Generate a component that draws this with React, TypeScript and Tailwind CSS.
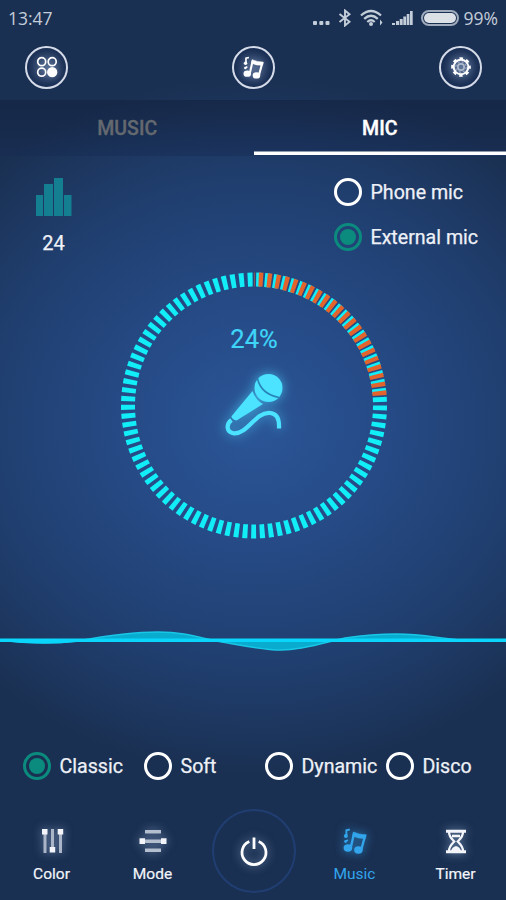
import React from 'react';

const glow = 'drop-shadow-[0_0_5px_rgba(190,215,255,0.55)]';

const MusicNotes: React.FC<{ className?: string }> = ({ className }) => (
  <svg viewBox="0 0 24 26" className={className} fill="none" stroke="currentColor">
    <path d="M7.800 19.500 10.900 6M18.300 21.500 22 8" strokeWidth="2.400" strokeLinecap="round" />
    <path d="M10.300 4Q17 7 23.200 6.800L22.400 10.500Q15.500 10.800 9.700 8Z" fill="currentColor" strokeWidth="0.6" />
    <ellipse cx="4.900" cy="20" rx="4.300" ry="3.700" fill="currentColor" stroke="none" />
    <ellipse cx="15.400" cy="22" rx="4.300" ry="3.700" fill="currentColor" stroke="none" />
    <path d="M3.400 7.500V2.300L6.800 1.500M2.500 13.500L5 12" strokeWidth="1.900" />
    <circle cx="2.900" cy="8" r="2" fill="currentColor" stroke="none" />
    <circle cx="2.600" cy="13.500" r="1.400" fill="currentColor" stroke="none" />
  </svg>
);

const RoundButton: React.FC<{ children: React.ReactNode }> = ({ children }) => (
  <button className="flex h-[43px] w-[43px] items-center justify-center rounded-full border-2 border-[#d5dbe8] bg-[radial-gradient(circle,#34496c_0%,#1a2f54_65%)] text-white">
    {children}
  </button>
);

const Radio: React.FC<{ label: string; checked?: boolean; className?: string }> = ({ label, checked, className = '' }) => (
  <label className={`flex items-center gap-[8.5px] whitespace-nowrap text-[19.6px] leading-7 text-[#eef1f7] [-webkit-text-stroke:0.25px_#eef1f7] ${className}`}>
    <span
      className={`flex h-7 w-7 shrink-0 items-center justify-center rounded-full border-[3px] ${
        checked ? 'border-[#0b8b7e]' : 'border-white'
      }`}
    >
      {checked && <span className="h-4 w-4 rounded-full bg-[#0b8b7e]" />}
    </span>
    <span className="pt-[2px]">{label}</span>
  </label>
);

const StatusBar: React.FC = () => (
  <div className="flex h-9 items-center justify-between pl-2 pr-[8px] font-['Open_Sans','Noto_Sans',sans-serif] text-[17.5px] text-[#c3ccd9]">
    <span>13:47</span>
    <div className="flex items-center">
      <svg width="17" height="5" className="mr-[8px] mt-[10px]" fill="currentColor">
        <rect x="0" y="0" width="4" height="4" rx="1" />
        <rect x="6.300" y="0" width="4" height="4" rx="1" />
        <rect x="12.500" y="0" width="4" height="4" rx="1" />
      </svg>
      <svg width="14" height="18" viewBox="0 0 14 18" className="mr-[8px]" fill="none" stroke="currentColor" strokeWidth="1.900">
        <path d="M1.500 5 11.500 12.800 7 16.500V1.500L11.500 5.200 1.500 13" />
      </svg>
      <svg width="24" height="18" viewBox="0 0 24 18" className="mr-[8px]" fill="none" stroke="currentColor" strokeWidth="2.300">
        <path d="M1 6.500Q11 -2.500 21 6.500M4.200 9.800Q11 3.800 17.800 9.800M7.300 13Q11 9.600 14.700 13" />
        <circle cx="11" cy="15" r="2" fill="currentColor" stroke="none" />
        <path d="M20 10.500 22.500 13.500 20 16.500Z" fill="currentColor" stroke="none" />
      </svg>
      <svg width="21" height="16" className="mr-[8px]" fill="currentColor">
        <path d="M0 13h3v2H0zM4 11h3v4H4zM7.700 9h3v6h-3zM11.300 6.500h2.800V15h-2.800zM14.700 4h2.700v11h-2.700zM18 1h2.700v14H18z" />
      </svg>
      <span className="mr-[5px] flex h-[16px] w-[38px] items-center justify-center rounded-full border-2 border-[#9fabbd]">
        <span className="h-[10px] w-[32px] rounded-full bg-[#dbe0e6]" />
      </span>
      <span className="text-[17.5px]">99%</span>
    </div>
  </div>
);

const Header: React.FC = () => (
  <div className="flex h-16 items-center justify-between pb-[2px] pl-[25px] pr-6">
    <RoundButton>
      <svg width="22" height="22" viewBox="0 0 22 22" className={glow} fill="none" stroke="currentColor" strokeWidth="1.700">
        <circle cx="5.700" cy="5.700" r="4" />
        <circle cx="16.200" cy="5.700" r="4" />
        <circle cx="5.700" cy="16.200" r="4" />
        <circle cx="16.200" cy="16.200" r="4.300" fill="currentColor" />
      </svg>
    </RoundButton>
    <RoundButton>
      <MusicNotes className={`h-[23px] w-[21px] ${glow}`} />
    </RoundButton>
    <RoundButton>
      <svg width="22" height="22" viewBox="-11 -11 22 22" className={glow} fill="none" stroke="currentColor">
        <circle r="7.300" strokeWidth="2" />
        <circle r="8.700" strokeWidth="2.300" strokeDasharray="3.500 3.333" strokeDashoffset="1.750" />
        <circle r="3.200" strokeWidth="1.700" stroke="#aeb9cb" />
        <circle r="5.200" strokeWidth="1.400" stroke="#93a2b9" strokeDasharray="2 2.084" />
      </svg>
    </RoundButton>
  </div>
);

const Tabs: React.FC = () => (
  <div className="flex h-14 bg-[linear-gradient(180deg,rgba(20,35,65,0.65),rgba(20,40,80,0.35))] text-[19.5px] font-medium">
    <div className="flex flex-1 items-center justify-center pl-px pt-px text-[#63696f] [-webkit-text-stroke:0.3px_#63696f]">MUSIC</div>
    <div className="flex flex-1 items-center justify-center pt-px text-white shadow-[inset_0_-1px_0_#1c3763,inset_0_-4.500px_0_#fff] [-webkit-text-stroke:0.4px_#fff]">
      MIC
    </div>
  </div>
);

const Dial: React.FC = () => (
  <svg width="270" height="270" viewBox="0 0 270 270" className="relative left-[0.5px] mx-auto block" fill="none">
    <circle cx="135" cy="135.500" r="126" stroke="#12eef7" strokeWidth="14" strokeDasharray="4.900 3.610" />
    <path
      d="M135 9.500A126 126 0 0 1 260.800 128.500"
      stroke="#e2632c"
      strokeWidth="14"
      strokeDasharray="4.300 4.210"
      strokeDashoffset="-4.700"
    />
    <text x="135" y="78" textAnchor="middle" fontSize="25.500" fill="#3fd5f8" stroke="#3fd5f8" strokeWidth="0.200">24%</text>
    <g className="drop-shadow-[0_0_6px_rgba(75,215,255,0.7)]">
      <circle cx="149.500" cy="118" r="14" fill="#4be3ff" />
      <path d="M138.500 108.500Q142 124 160 127.500" stroke="#2884b9" strokeWidth="1.600" />
      <path d="M133.500 121Q136.500 130 144 134L117.500 150.500Q113.500 150 112.300 146.500Z" fill="#4be3ff" />
      <path
        d="M112.500 150C107 154 107 162.500 115 163.300C129 164 136 142.500 150 142.800C158 143 160.500 149 160 158.500"
        stroke="#4be3ff"
        strokeWidth="4.200"
      />
    </g>
  </svg>
);

const Wave: React.FC = () => (
  <svg width="506" height="24" viewBox="0 628 506 24" className="block">
    <path
      d="M0 640C25 643 55 644 77 641C105 636 130 632 158 632C190 632 205 640 228 643C250 647 265 650 281 650C305 650 326 642 345 638C365 635 380 634 397 634C425 634 440 639 462 640Z"
      fill="#05bfdf"
      fillOpacity="0.85"
      stroke="#18c6e6"
      strokeWidth="1.500"
    />
    <path d="M0 640.300H506" stroke="#0ad6fb" strokeWidth="3.600" />
    <path d="M0 640C25 643 55 643 77 641" fill="none" stroke="#0ad6fb" strokeWidth="2" />
  </svg>
);

const NavItem: React.FC<{ label: string; active?: boolean; children: React.ReactNode }> = ({ label, active, children }) => (
  <div
    className={`flex flex-1 flex-col items-center text-[15.5px] ${
      active ? 'text-[#32a5ed]' : 'text-[#f3f5fa] [-webkit-text-stroke:0.2px_#f3f5fa]'
    }`}
  >
    <div className={`flex h-[30px] items-center ${active ? 'drop-shadow-[0_0_5px_rgba(50,165,240,0.7)]' : glow}`}>{children}</div>
    <span className="mt-2 leading-5">{label}</span>
  </div>
);

const BottomNav: React.FC = () => (
  <div className="flex h-[92px] pl-px pt-[18px]">
    <NavItem label="Color">
      <svg width="26" height="26" fill="currentColor" stroke="none">
        <path d="M4.500 4h3v21h-3zM12 1h3v22h-3zM20 4h3v21h-3z" fill="#aab6c8" />
        <path d="M3 1h5.500v5.500H3zM10.700 19h5.500v5.500h-5.500zM18.700 1h5.500v5.500h-5.500z" />
      </svg>
    </NavItem>
    <NavItem label="Mode">
      <svg width="28" height="24" fill="currentColor" stroke="none">
        <path d="M6 1h16v3.500H6zM4 10.500h20V14H4zM6 19.500h16V23H6z" fill="#b3bece" />
        <path d="M0.500 9.300H6v5.700H0.500zM22 9.300h5.500v5.700H22z" />
      </svg>
    </NavItem>
    <div className="flex flex-1 justify-center">
      <button className="-mt-[17px] flex h-[84px] w-[84px] items-center justify-center rounded-full border-2 border-[#203e72] text-white">
        <svg width="30" height="32" viewBox="0 0 30 32" className={glow} fill="none" stroke="currentColor" strokeWidth="2.800">
          <path d="M10.300 6.500A12 12 0 1 0 19.700 6.500M15 2.500V14" />
        </svg>
      </button>
    </div>
    <NavItem label="Music" active>
      <MusicNotes className="h-[26px] w-6" />
    </NavItem>
    <NavItem label="Timer">
      <svg width="22" height="25" viewBox="0 0 22 25" fill="none" stroke="currentColor" strokeWidth="2.300">
        <path d="M1 2.200H21M1 22.800H21" strokeWidth="3" />
        <path d="M4 3C4 8 7 10 9.300 12.500C7 15 4 17 4 22M18 3C18 8 15 10 12.700 12.500C15 15 18 17 18 22M7 7H15" />
        <path d="M6 22Q7 18 11 17Q15 18 16 22Z" fill="currentColor" stroke="none" />
      </svg>
    </NavItem>
  </div>
);

const App: React.FC = () => {
  return (
    <div className="h-[900px] w-[506px] overflow-hidden bg-[#1a3052] bg-[radial-gradient(ellipse_385px_350px_at_254px_425px,#2b5698_0%,#264b87_32%,#203f70_68%,#1a3052_100%)] font-[Roboto,sans-serif]">
      <StatusBar />
      <Header />
      <Tabs />
      <div className="flex h-[114px] justify-between">
        <div className="flex w-[107px] flex-col items-center pt-[22px]">
          <svg width="36" height="38" fill="#147f90">
            <path d="M0 17h7v21H0zM8 6h9v32H8zM18 0h9v38h-9zM28 17h7.500v21H28z" />
          </svg>
          <span className="mt-[13px] text-[20px] leading-7 text-[#eef1f7] [-webkit-text-stroke:0.25px_#eef1f7]">24</span>
        </div>
        <div className="flex w-[172px] flex-col gap-[15px] pt-[21px]">
          <Radio label="Phone mic" />
          <Radio label="External mic" checked />
        </div>
      </div>
      <Dial />
      <div className="pt-[88px]">
        <Wave />
      </div>
      <div className="mt-[100px] flex h-7 items-center pl-[23px]">
        <Radio label="Classic" checked className="w-[121px]" />
        <Radio label="Soft" className="w-[121px]" />
        <Radio label="Dynamic" className="w-[121px]" />
        <Radio label="Disco" />
      </div>
      <div className="pt-7">
        <BottomNav />
      </div>
    </div>
  );
};

export default App;
